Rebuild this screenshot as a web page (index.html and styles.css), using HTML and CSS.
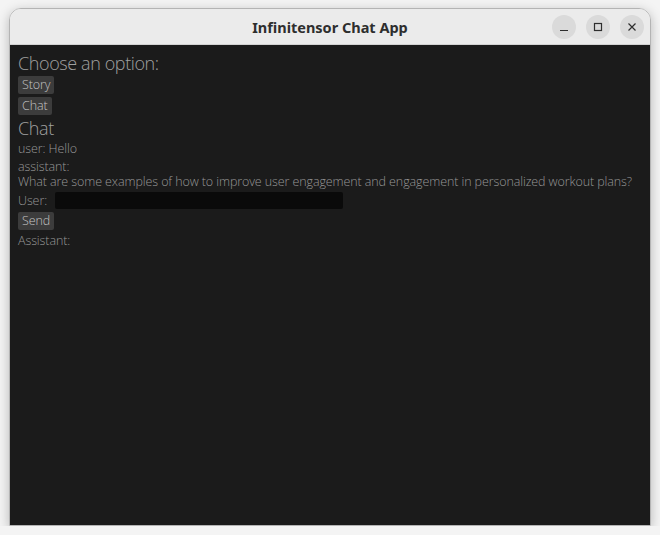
FILE: index.html
```html
<!DOCTYPE html>
<html lang="en">
<head>
  <meta charset="UTF-8" />
  <meta name="viewport" content="width=device-width, initial-scale=1.0"/>
  <title>Infinitensor Chat App</title>
  <link rel="stylesheet" href="styles.css">
</head>
<body>

  <div class="window">
    <div class="titlebar">
      <div></div>
      <div class="title">Infinitensor Chat App</div>
      <div class="controls">
        <span class="ctl">
          <svg width="10" height="10" viewBox="0 0 10 10"><path d="M1 8.5h8" stroke="#2e2e2e" stroke-width="1.2"/></svg>
        </span>
        <span class="ctl">
          <svg width="10" height="10" viewBox="0 0 10 10"><rect x="1.5" y="1.5" width="7" height="7" fill="none" stroke="#2e2e2e" stroke-width="1.2"/></svg>
        </span>
        <span class="ctl">
          <svg width="10" height="10" viewBox="0 0 10 10"><path d="M1.5 1.5l7 7M8.5 1.5l-7 7" stroke="#2e2e2e" stroke-width="1.2"/></svg>
        </span>
      </div>
    </div>

    <div class="content">
      <div class="heading">Choose an option:</div>
      <div><button class="btn">Story</button></div>
      <div><button class="btn">Chat</button></div>
      <div class="heading">Chat</div>
      <div class="label">user: Hello</div>
      <div class="label">assistant:<br>What are some examples of how to improve user engagement and engagement in personalized workout plans?</div>
      <div class="input-row">
        <span class="label">User:</span>
        <input type="text" class="text-edit">
      </div>
      <div><button class="btn">Send</button></div>
      <div class="label">Assistant:</div>
    </div>
  </div>

</body>
</html>
```

FILE: styles.css
```css
body {
  margin: 0;
  background: #f4f4f4;
  font-family: "Open Sans", "DejaVu Sans", sans-serif;
}

.window {
  margin: 8px 9px 0 9px;
  width: 640px;
  height: 516px;
  border: 1px solid #b4b4b4;
  border-radius: 12px 12px 0 0;
  overflow: hidden;
  display: flex;
  flex-direction: column;
  box-shadow: 0 3px 12px rgba(0, 0, 0, 0.25);
}

.titlebar {
  height: 35px;
  background: #ebebeb;
  border-bottom: 1px solid #d2d2d2;
  display: grid;
  grid-template-columns: 1fr auto 1fr;
  align-items: center;
}

.title {
  font-family: "Noto Sans", "Open Sans", sans-serif;
  font-weight: bold;
  font-size: 14.5px;
  color: #2e2e2e;
}

.controls {
  display: flex;
  justify-content: flex-end;
  gap: 10px;
  padding-right: 6px;
}

.ctl {
  width: 24px;
  height: 24px;
  border-radius: 50%;
  background: #dadada;
  display: flex;
  align-items: center;
  justify-content: center;
}

.content {
  flex: 1;
  background: #1b1b1b;
  padding: 8px;
  display: flex;
  flex-direction: column;
  gap: 3px;
  color: #979797;
  font-weight: 300;
  font-size: 12.5px;
  line-height: 15px;
  letter-spacing: -0.1px;
  white-space: nowrap;
}

.heading {
  font-size: 18px;
  line-height: 20px;
  letter-spacing: -0.4px;
  color: #a0a0a0;
}

.btn {
  font-family: inherit;
  font-weight: 300;
  font-size: 12.5px;
  letter-spacing: -0.1px;
  line-height: 16px;
  height: 18px;
  padding: 0 4px;
  border: none;
  border-radius: 2px;
  background: #3c3c3c;
  color: #c4c4c4;
}

.input-row {
  display: flex;
  align-items: center;
  gap: 8px;
}

.text-edit {
  width: 288px;
  height: 17px;
  box-sizing: border-box;
  border: none;
  border-radius: 2px;
  background: #0a0a0a;
}
```
